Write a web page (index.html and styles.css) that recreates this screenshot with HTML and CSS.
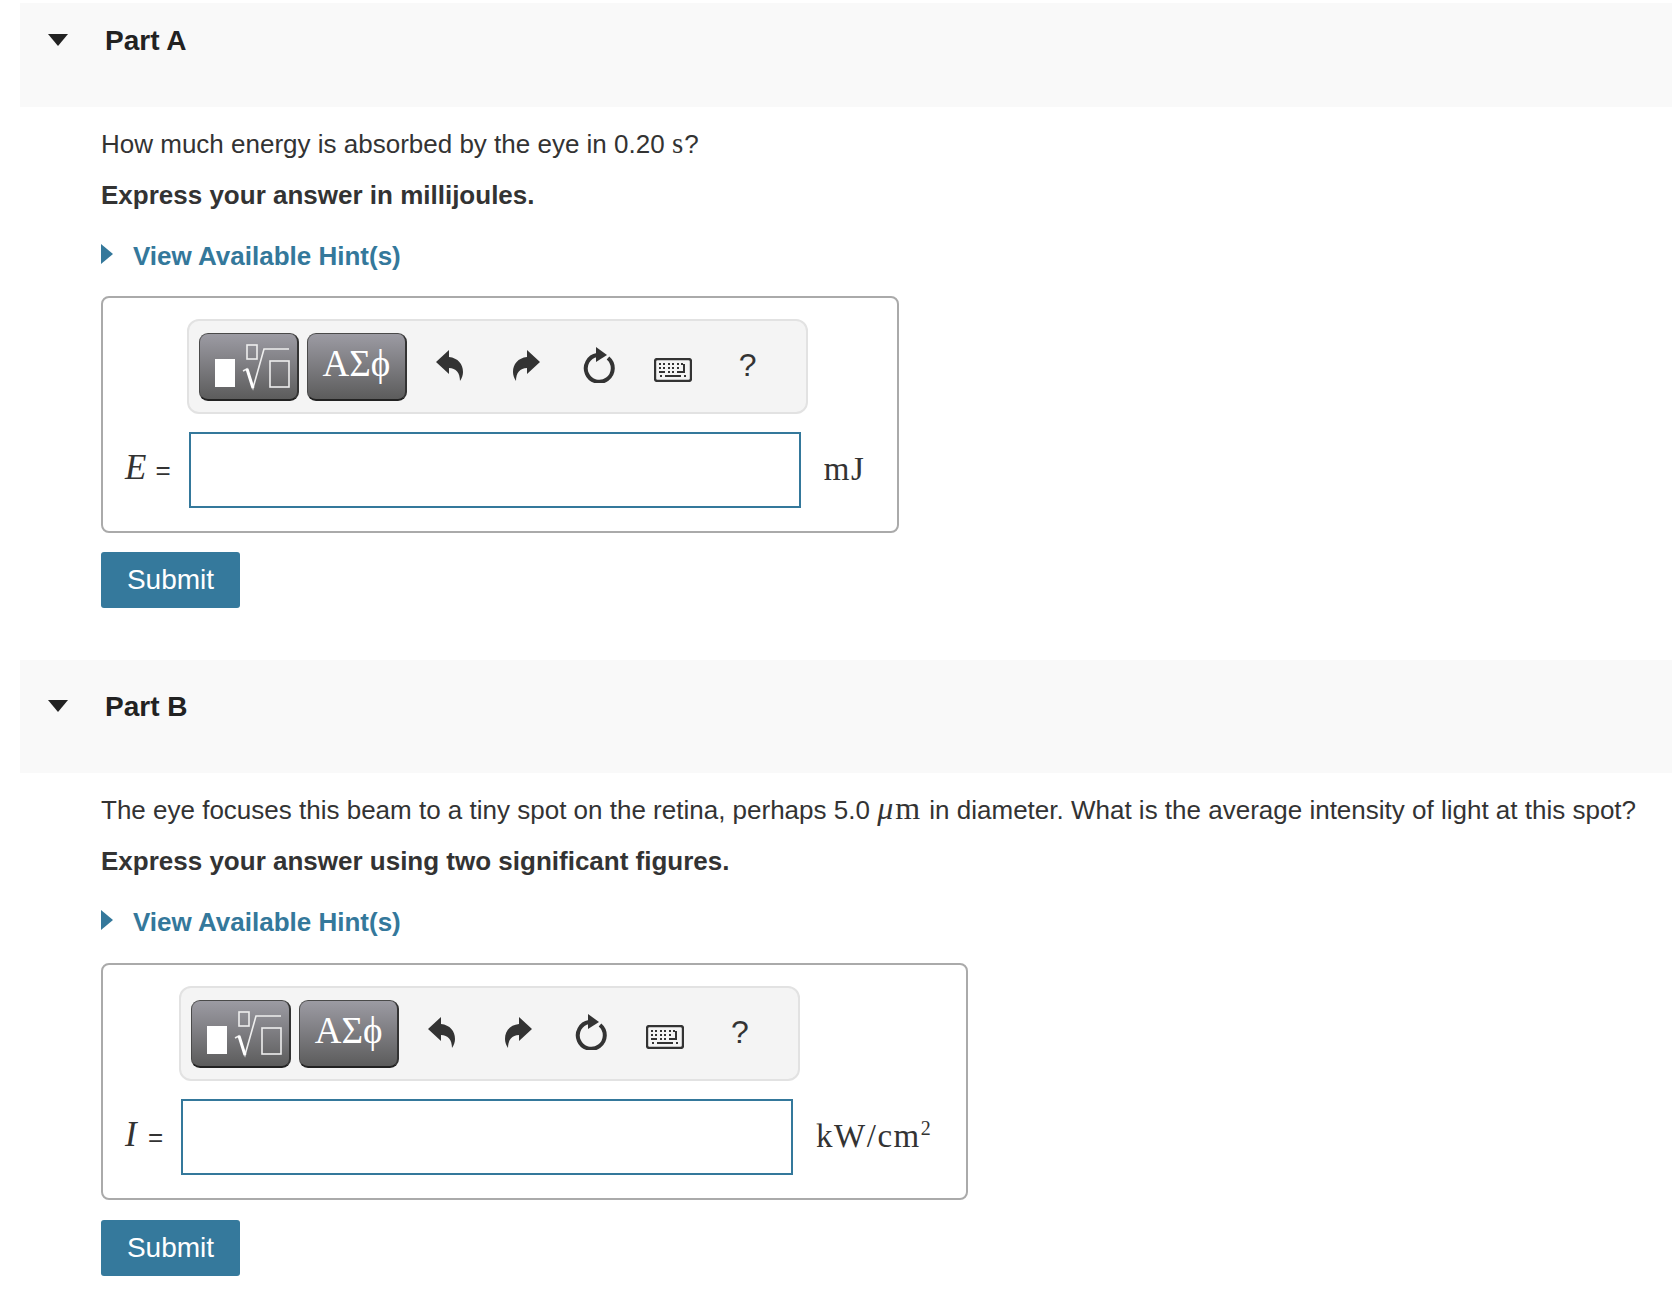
FILE: index.html
```html
<!DOCTYPE html>
<html lang="en">
<head>
	<meta charset="UTF-8">
	<title>Part A and Part B</title>
	<link rel="stylesheet" href="styles.css">
</head>
<body>
	<section class="part part-first">
		<header class="part-head">
			<span class="part-arrow"></span>
			<h2>Part A</h2>
		</header>
		<div class="part-body">
			<p class="question">How much energy is absorbed by the eye in 0.20 <span class="math">s</span>?</p>
			<p class="instruction">Express your answer in millijoules.</p>
			<a class="hint" href="#"><span class="hint-arrow"></span>View Available Hint(s)</a>
			<div class="answer-box">
				<div class="toolbar">
					<button class="math-btn" type="button" aria-label="Templates">
						<svg width="100" height="68" viewBox="0 0 100 68">
							<rect x="16" y="26" width="20" height="28" fill="#fff"/>
							<rect x="48" y="12" width="10" height="14" fill="none" stroke="#eee" stroke-width="1.6"/>
							<path d="M44 38l4-2 6 19 11-39h25" fill="none" stroke="#eee" stroke-width="1.6"/>
							<path d="M48 36l6 19" fill="none" stroke="#fff" stroke-width="3"/>
							<rect x="71" y="28" width="19" height="26" fill="none" stroke="#eee" stroke-width="1.6"/>
						</svg>
					</button>
					<button class="math-btn greek" type="button">ΑΣϕ</button>
					<svg class="tool tool-undo" width="27" height="31" viewBox="0 0 27 31"><path d="M0 12L13 0v7c9 1 14 7 14 15 0 3-1 6-3 9 0-8-4-13-11-13v6z" fill="#333"/></svg>
					<svg class="tool tool-redo" width="27" height="31" viewBox="0 0 27 31"><path d="M27 12L14 0v7C5 8 0 14 0 22c0 3 1 6 3 9 0-8 4-13 11-13v6z" fill="#333"/></svg>
					<svg class="tool tool-reset" width="32" height="36" viewBox="0 0 32 36"><path d="M25 11a13.500 13.500 0 1 1-11-3" fill="none" stroke="#333" stroke-width="4"/><path d="M13 0l11 8-11 7z" fill="#333"/></svg>
					<svg class="tool tool-keys" width="38" height="24" viewBox="0 0 38 24">
						<rect x="1" y="1" width="36" height="22" rx="2.500" fill="none" stroke="#333" stroke-width="2.400"/>
						<path d="M5 6h2M9 6h2M14 6h2M18 6h2M23 6h2M27 6h2M5 10h2M9 10h2M14 10h2M18 10h2M23 10h2M5 14h6M14 14h2M18 14h2M23 14h4M30 6v8h-3M6 18h2M11 18h16M30 18h2" fill="none" stroke="#333" stroke-width="2"/>
					</svg>
					<span class="tool tool-help">?</span>
				</div>
				<label class="answer-label"><i class="math">E</i> =</label>
				<input class="answer-input" type="text">
				<span class="units math">mJ</span>
			</div>
			<button class="submit" type="button">Submit</button>
		</div>
	</section>

	<section class="part">
		<header class="part-head">
			<span class="part-arrow"></span>
			<h2>Part B</h2>
		</header>
		<div class="part-body">
			<p class="question">The eye focuses this beam to a tiny spot on the retina, perhaps 5.0 <span class="math micro"><i>μ</i>m</span> in diameter. What is the average intensity of light at this spot?</p>
			<p class="instruction">Express your answer using two significant figures.</p>
			<a class="hint" href="#"><span class="hint-arrow"></span>View Available Hint(s)</a>
			<div class="answer-box">
				<div class="toolbar">
					<button class="math-btn" type="button" aria-label="Templates">
						<svg width="100" height="68" viewBox="0 0 100 68">
							<rect x="16" y="26" width="20" height="28" fill="#fff"/>
							<rect x="48" y="12" width="10" height="14" fill="none" stroke="#eee" stroke-width="1.6"/>
							<path d="M44 38l4-2 6 19 11-39h25" fill="none" stroke="#eee" stroke-width="1.6"/>
							<path d="M48 36l6 19" fill="none" stroke="#fff" stroke-width="3"/>
							<rect x="71" y="28" width="19" height="26" fill="none" stroke="#eee" stroke-width="1.6"/>
						</svg>
					</button>
					<button class="math-btn greek" type="button">ΑΣϕ</button>
					<svg class="tool tool-undo" width="27" height="31" viewBox="0 0 27 31"><path d="M0 12L13 0v7c9 1 14 7 14 15 0 3-1 6-3 9 0-8-4-13-11-13v6z" fill="#333"/></svg>
					<svg class="tool tool-redo" width="27" height="31" viewBox="0 0 27 31"><path d="M27 12L14 0v7C5 8 0 14 0 22c0 3 1 6 3 9 0-8 4-13 11-13v6z" fill="#333"/></svg>
					<svg class="tool tool-reset" width="32" height="36" viewBox="0 0 32 36"><path d="M25 11a13.500 13.500 0 1 1-11-3" fill="none" stroke="#333" stroke-width="4"/><path d="M13 0l11 8-11 7z" fill="#333"/></svg>
					<svg class="tool tool-keys" width="38" height="24" viewBox="0 0 38 24">
						<rect x="1" y="1" width="36" height="22" rx="2.500" fill="none" stroke="#333" stroke-width="2.400"/>
						<path d="M5 6h2M9 6h2M14 6h2M18 6h2M23 6h2M27 6h2M5 10h2M9 10h2M14 10h2M18 10h2M23 10h2M5 14h6M14 14h2M18 14h2M23 14h4M30 6v8h-3M6 18h2M11 18h16M30 18h2" fill="none" stroke="#333" stroke-width="2"/>
					</svg>
					<span class="tool tool-help">?</span>
				</div>
				<label class="answer-label"><i class="math">I</i> =</label>
				<input class="answer-input" type="text">
				<span class="units math">kW/cm<sup>2</sup></span>
			</div>
			<button class="submit" type="button">Submit</button>
		</div>
	</section>
</body>
</html>
```

FILE: styles.css
```css
/* Base styles */
:root {
	--color-text: #333;
	--color-link: #34789b;
	--color-head: #f9f9f9;
	--color-border: #aaa;
}

body {
	margin: 0;
	padding-top: 3px;
	background: #fff;
	color: var(--color-text);
	font-family: "Liberation Sans", Arial, sans-serif;
	font-size: 26px;
	line-height: 32px;
	overflow-x: hidden;
}

.math {
	font-family: "Liberation Serif", "Times New Roman", serif;
}

/* Part header */
.part-head {
	display: flex;
	align-items: flex-start;
	height: 113px;
	margin-left: 20px;
	padding-top: 31px;
	box-sizing: border-box;
	background: var(--color-head);
}

.part-first .part-head {
	height: 104px;
	padding-top: 22px;
}

.part-arrow {
	width: 0;
	height: 0;
	margin: 9px 0 0 28px;
	border-style: solid;
	border-width: 12px 10.500px 0;
	border-color: #222 transparent transparent;
}

.part-head h2 {
	margin: 0 0 0 37px;
	color: #222;
	font-size: 28px;
	line-height: 32px;
	font-weight: bold;
}

/* Part content */
.part-body {
	padding: 21px 0 52px 101px;
}

.part:last-child .part-body {
	padding-bottom: 0;
}

.part-body p {
	margin: 0;
}

.question .math {
	font-size: 29px;
	letter-spacing: 1px;
	line-height: 0;
}

.question .micro {
	font-size: 32px;
	letter-spacing: 2px;
}

.instruction {
	margin-top: 19px !important;
	font-weight: bold;
}

.hint {
	display: flex;
	align-items: center;
	margin-top: 29px;
	color: var(--color-link);
	font-weight: bold;
	text-decoration: none;
}

.hint-arrow {
	width: 0;
	height: 0;
	margin: -5px 20px 0 0;
	border-style: solid;
	border-width: 10px 0 10px 12px;
	border-color: transparent transparent transparent var(--color-link);
}

/* Answer box */
.answer-box {
	display: inline-grid;
	grid-template-columns: auto 612px auto;
	column-gap: 18px;
	align-items: center;
	margin-top: 24px;
	padding: 21px 32px 23px 22px;
	border: 2px solid var(--color-border);
	border-radius: 8px;
	vertical-align: top;
}

.part:last-child .answer-box {
	margin-top: 25px;
}

.toolbar {
	grid-column: 2 / 4;
	display: flex;
	align-items: center;
	box-sizing: border-box;
	width: 621px;
	height: 95px;
	margin: 0 0 18px -2px;
	padding-left: 10px;
	background: #f4f4f4;
	border: 2px solid #e2e2e2;
	border-radius: 12px;
}

.math-btn {
	box-sizing: border-box;
	width: 100px;
	height: 68px;
	margin-right: 8px;
	padding: 0;
	color: #fff;
	background: linear-gradient(#9c9ba3, #5c5c5c);
	border: 1px solid #4a4a4a;
	border-bottom: 2px solid #222;
	border-right: 2px solid #333;
	border-radius: 9px;
}

.math-btn svg {
	display: block;
	margin: -1px;
}

.greek {
	margin-right: 0;
	font-family: "Liberation Serif", serif;
	font-size: 37px;
	padding-bottom: 5px;
}

.tool {
	flex: none;
	display: block;
}

.tool-undo {
	margin: -3px 0 0 29px;
}

.tool-redo {
	margin: -3px 0 0 50px;
}

.tool-reset {
	margin: -3px 0 0 43px;
}

.tool-keys {
	margin: 7px 0 0 39px;
}

.tool-help {
	margin: -3px 0 0 47px;
	font-size: 32px;
	color: #333;
}

.answer-label {
	white-space: nowrap;
	margin-top: -2px;
}

.answer-label .math {
	font-size: 35px;
	margin-right: 4px;
}

.part-first .answer-label .math {
	margin-right: 2px;
}

.answer-input {
	box-sizing: border-box;
	width: 612px;
	height: 76px;
	border: 2px solid var(--color-link);
	border-radius: 0;
	background: #fff;
}

.units {
	margin: -2px 0 0 5px;
	font-size: 33px;
	letter-spacing: 1.500px;
	white-space: nowrap;
}

.units sup {
	margin-right: 3px;
	font-size: 20px;
	line-height: 0;
	letter-spacing: 0;
}

/* Submit */
.submit {
	display: block;
	box-sizing: border-box;
	width: 139px;
	height: 56px;
	margin-top: 20px;
	padding: 0;
	color: #fff;
	background: #35799c;
	border: 0;
	border-radius: 3px;
	font-family: inherit;
	font-size: 28px;
}

.part-first .submit {
	margin-top: 19px;
}
```
